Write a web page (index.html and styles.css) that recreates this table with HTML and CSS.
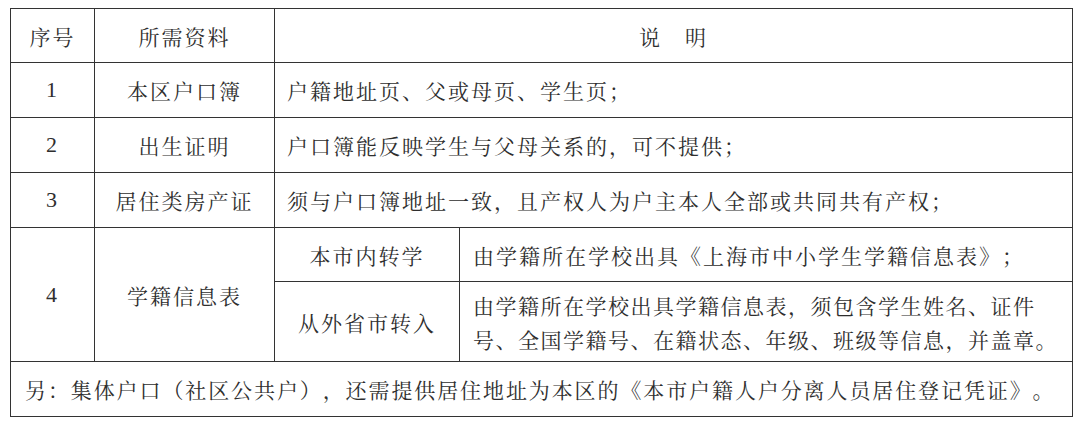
FILE: index.html
```html
<!DOCTYPE html>
<html lang="zh-CN">
<head>
<meta charset="utf-8">
<title>所需资料</title>
<link rel="stylesheet" href="styles.css">
</head>
<body>
<table class="req">
  <colgroup>
    <col class="c-no">
    <col class="c-item">
    <col class="c-sub">
    <col class="c-desc">
  </colgroup>
  <tr class="r-head">
    <th>序号</th>
    <th>所需资料</th>
    <th colspan="2">说　明</th>
  </tr>
  <tr class="r-std">
    <td class="num">1</td>
    <td class="center">本区户口簿</td>
    <td colspan="2" class="desc">户籍地址页、父或母页、学生页；</td>
  </tr>
  <tr class="r-std">
    <td class="num">2</td>
    <td class="center">出生证明</td>
    <td colspan="2" class="desc">户口簿能反映学生与父母关系的，可不提供；</td>
  </tr>
  <tr class="r-std">
    <td class="num">3</td>
    <td class="center">居住类房产证</td>
    <td colspan="2" class="desc">须与户口簿地址一致，且产权人为户主本人全部或共同共有产权；</td>
  </tr>
  <tr class="r-4a">
    <td class="num" rowspan="2">4</td>
    <td class="center" rowspan="2">学籍信息表</td>
    <td class="center">本市内转学</td>
    <td class="desc2">由学籍所在学校出具《上海市中小学生学籍信息表》；</td>
  </tr>
  <tr class="r-4b">
    <td class="center">从外省市转入</td>
    <td class="desc2 tight">由学籍所在学校出具学籍信息表，须包含学生姓名、证件<br>号、全国学籍号、在籍状态、年级、班级等信息，并盖章。</td>
  </tr>
  <tr class="r-foot">
    <td colspan="4" class="foot">另：集体户口（社区公共户），还需提供居住地址为本区的《本市户籍人户分离人员居住登记凭证》。</td>
  </tr>
</table>
</body>
</html>
```

FILE: styles.css
```css
html, body {
  background: #ffffff;
}
body {
  margin: 0;
  padding: 8px 0 0 10px;
  font-family: "Noto Serif CJK SC", "Liberation Serif", "Noto Sans CJK SC", serif;
  color: #2e2e2e;
}
.req {
  border-collapse: collapse;
  table-layout: fixed;
  width: 1062px;
  font-size: 21px;
  letter-spacing: 2px;
  font-weight: 400;
  text-spacing-trim: space-all;
}
.c-no { width: 84px; }
.c-item { width: 180px; }
.c-sub { width: 185px; }
.c-desc { width: 613px; }
.req th, .req td {
  border: 1px solid #333333;
  padding: 0;
  vertical-align: middle;
}
.req th {
  font-weight: 400;
  text-align: center;
}
.r-head { height: 54px; }
.r-std { height: 55px; }
.r-4a { height: 54px; }
.r-4b { height: 80px; }
.r-foot { height: 55px; }
.num {
  text-align: center;
  font-family: "Liberation Serif", serif;
  font-size: 22px;
}
.center { text-align: center; }
.desc { padding-left: 12px !important; }
.desc2 {
  padding-left: 13px !important;
  padding-right: 4px !important;
  line-height: 34px;
  white-space: nowrap;
}
.tight { letter-spacing: 1.5px; }
.foot {
  padding-left: 14px !important;
  letter-spacing: 1.9px;
  white-space: nowrap;
}
```
